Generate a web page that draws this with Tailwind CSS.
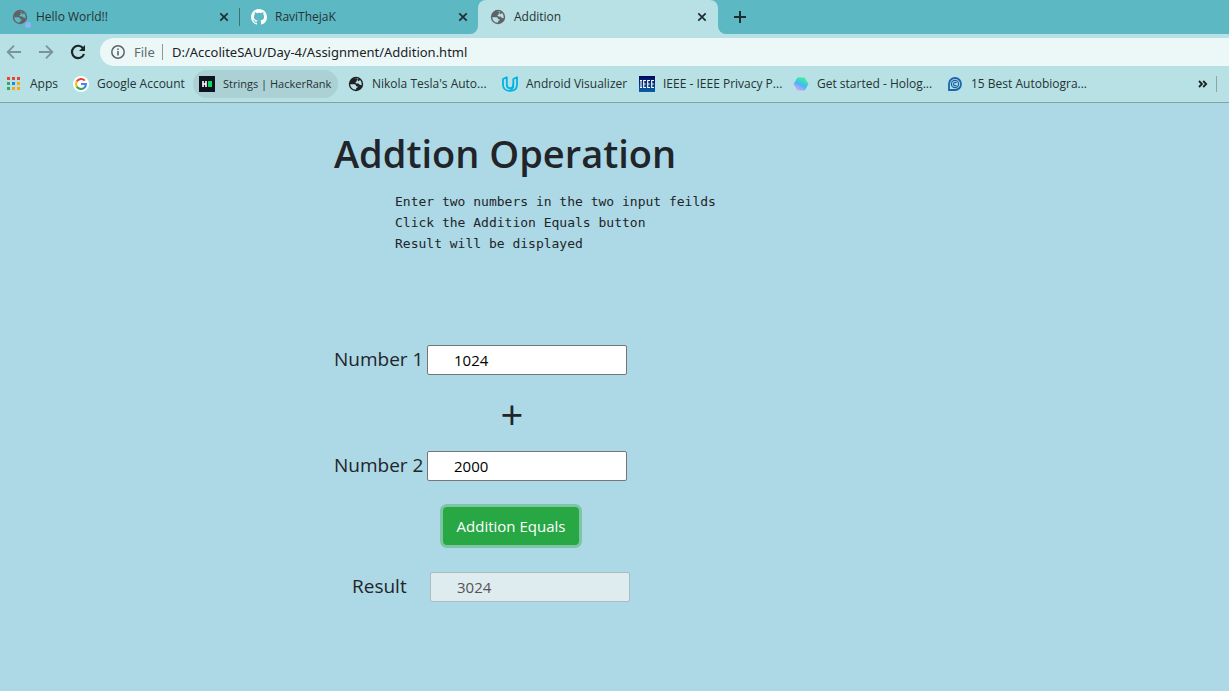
<!DOCTYPE html>
<html lang="en">
<head>
<meta charset="utf-8">
<title>Addition</title>
<script src="https://cdn.jsdelivr.net/npm/@tailwindcss/browser@4"></script>
</head>
<body class="flex min-h-screen flex-col bg-[#add8e6] font-['Open_Sans','Noto_Sans',sans-serif] text-[#212529]">
<svg class="hidden" aria-hidden="true">
  <symbol id="globe" viewBox="0 0 16 16">
    <circle cx="8" cy="8" r="7.2" fill="currentColor"/>
    <path d="M2.2 8.2 6.4 8.3C7.8 8.3 8 9.3 8 10.2L9.7 10.3C9.8 11.3 9.2 12 8.2 12V13.6C5 13.9 2.3 11.4 2.2 8.2ZM6.6 3 8.8 2.4C9.8 2.4 10.2 3.2 9.5 3.8L8.6 4.6V5.8L7.2 6.3 8.4 7.4H10.6L11.6 8.8 13.6 9.2C13.9 7.2 13.3 5.2 12 4L10.6 5.2 9.6 4.8 10.4 2.7C9.2 2.1 7.8 2.1 6.6 3Z" fill="#b7e1e4"/>
  </symbol>
  <symbol id="close" viewBox="0 0 10 10"><path d="M1.3 1.3 8.7 8.7M8.7 1.3 1.3 8.7" stroke="#1f2d30" stroke-width="1.7"/></symbol>
</svg>

<header class="bg-[#b7e1e4] text-[#263234]">
  <nav class="flex h-[34px] bg-[#5cb8c2] text-xs" aria-label="Tabs">
    <div class="flex w-[239px] items-center pr-2.5 pl-3">
      <span class="relative h-4 w-4 shrink-0">
        <svg class="h-4 w-4 text-[#5f6368]" viewBox="0 0 16 16"><circle cx="8" cy="8" r="7.2" fill="currentColor"/><path d="M2.2 8.2 6.4 8.3C7.8 8.3 8 9.3 8 10.2L9.7 10.3C9.8 11.3 9.2 12 8.2 12V13.6C5 13.9 2.3 11.4 2.2 8.2ZM6.6 3 8.8 2.4C9.8 2.4 10.2 3.2 9.5 3.8L8.6 4.6V5.8L7.2 6.3 8.4 7.4H10.6L11.6 8.8 13.6 9.2C13.9 7.2 13.3 5.2 12 4L10.6 5.2 9.6 4.8 10.4 2.7C9.2 2.1 7.8 2.1 6.6 3Z" fill="#5cb8c2"/></svg>
        <span class="absolute top-[13px] left-[13px] h-1.5 w-1.5 rounded-full bg-[#8ab4f8]"></span>
      </span>
      <span class="ml-2 grow">Hello World!!</span>
      <button aria-label="Close Hello World!!"><svg class="h-2.5 w-2.5"><use href="#close"/></svg></button>
    </div>
    <div class="my-2 w-px bg-[#3c7178]"></div>
    <div class="flex w-[238px] items-center pr-2.5 pl-[11px]">
      <svg class="h-4 w-4 shrink-0" viewBox="0 0 16 16" fill="#fff"><path d="M8 0C3.58 0 0 3.58 0 8c0 3.54 2.29 6.53 5.47 7.59.4.07.55-.17.55-.38 0-.19-.01-.82-.01-1.49-2.01.37-2.53-.49-2.69-.94-.09-.23-.48-.94-.82-1.13-.28-.15-.68-.52-.01-.53.63-.01 1.08.58 1.23.82.72 1.21 1.87.87 2.33.66.07-.52.28-.87.51-1.07-1.78-.2-3.64-.89-3.64-3.95 0-.87.31-1.59.82-2.15-.08-.2-.36-1.02.08-2.12 0 0 .67-.21 2.2.82.64-.18 1.32-.27 2-.27s1.36.09 2 .27c1.53-1.04 2.2-.82 2.2-.82.44 1.1.16 1.92.08 2.12.51.56.82 1.27.82 2.15 0 3.07-1.87 3.75-3.65 3.95.29.25.54.73.54 1.48 0 1.07-.01 1.93-.01 2.2 0 .21.15.46.55.38A8.01 8.01 0 0 0 16 8c0-4.42-3.58-8-8-8z"/></svg>
      <span class="ml-2 grow">RaviThejaK</span>
      <button aria-label="Close RaviThejaK"><svg class="h-2.5 w-2.5"><use href="#close"/></svg></button>
    </div>
    <div class="relative flex w-60 items-center rounded-t-lg bg-[#b7e1e4] pr-[11px] pl-3">
      <svg class="absolute bottom-0 -left-2 h-2 w-2" viewBox="0 0 8 8"><path d="M8 0V8H0A8 8 0 0 0 8 0Z" fill="#b7e1e4"/></svg>
      <svg class="absolute -right-2 bottom-0 h-2 w-2" viewBox="0 0 8 8"><path d="M0 0V8H8A8 8 0 0 1 0 0Z" fill="#b7e1e4"/></svg>
      <svg class="h-4 w-4 shrink-0 text-[#5f6368]"><use href="#globe"/></svg>
      <span class="ml-2 grow">Addition</span>
      <button aria-label="Close Addition"><svg class="h-2.5 w-2.5"><use href="#close"/></svg></button>
    </div>
    <button class="ml-4" aria-label="New tab"><svg class="h-3 w-3" viewBox="0 0 12 12"><path d="M6 0V12M0 6H12" stroke="#1f2d30" stroke-width="2"/></svg></button>
  </nav>

  <div class="flex h-9 items-center text-sm">
    <button class="ml-1.5" aria-label="Back"><svg class="h-4 w-4" viewBox="0 0 16 16" fill="none" stroke="#7b9497" stroke-width="1.8"><path d="M15 8H2M8 1.7 1.7 8 8 14.3"/></svg></button>
    <button class="ml-4" aria-label="Forward"><svg class="h-4 w-4" viewBox="0 0 16 16" fill="none" stroke="#7b9497" stroke-width="1.8"><path d="M1 8H14M8 1.7 14.3 8 8 14.3"/></svg></button>
    <button class="ml-4" aria-label="Reload"><svg class="h-4 w-4" viewBox="0 0 16 16"><path d="M13.3 4.5A6.2 6.2 0 1 0 14 10" fill="none" stroke="#1f2426" stroke-width="2.2"/><path d="M15 1V7H9Z" fill="#1f2426"/></svg></button>
    <div class="ml-3.5 flex h-7 grow items-center rounded-l-full bg-[#ecf8f8] pl-[11px]">
      <svg class="h-3.5 w-3.5 shrink-0" viewBox="0 0 14 14"><circle cx="7" cy="7" r="6.2" fill="none" stroke="#5f6368" stroke-width="1.5"/><path d="M6.2 3.4H7.8V5H6.2ZM6.2 6.1H7.8V10.6H6.2Z" fill="#5f6368"/></svg>
      <span class="ml-[9px] w-7 font-['Noto_Sans',sans-serif] text-[13px] text-[#5f6b6d]">File</span>
      <span class="h-4 w-px bg-[#8a999b]"></span>
      <input class="ml-[9px] grow font-['Noto_Sans',sans-serif] text-[13px] text-[#202124] outline-none" aria-label="Address" value="D:/AccoliteSAU/Day-4/Assignment/Addition.html">
    </div>
  </div>

  <nav class="flex h-[33px] items-center gap-1 border-b border-[#84a1a5] pb-1 pl-px text-xs whitespace-nowrap" aria-label="Bookmarks">
    <a href="#" class="flex h-7 w-[62px] items-center gap-[7px] px-1.5">
      <svg class="h-4 w-4 shrink-0" viewBox="0 0 16 16"><path d="M0 1H3V4H0ZM5 1H8V4H5ZM10 1H13V4H10Z" fill="#ea4335"/><path d="M0 6H3V9H0ZM0 11H3V14H0Z" fill="#34a853"/><path d="M5 6H8V9H5Z" fill="#1a87f0"/><path d="M10 6H13V9H10ZM5 11H8V14H5ZM10 11H13V14H10Z" fill="#fbab05"/></svg>Apps</a>
    <a href="#" class="flex h-7 w-[122px] items-center gap-2 px-1.5">
      <svg class="h-4 w-4 shrink-0" viewBox="0 0 16 16"><circle cx="8" cy="8" r="8" fill="#fff"/><g fill="none" stroke-width="2.1"><path d="M11.8 4.6A5 5 0 0 0 3.7 5.6" stroke="#ea4335"/><path d="M3.7 5.5A5 5 0 0 0 3.7 10.5" stroke="#fbbc05"/><path d="M3.7 10.4A5 5 0 0 0 11.2 11.9" stroke="#34a853"/><path d="M11.2 11.9A5 5 0 0 0 12.9 8H8" stroke="#4285f4"/></g></svg>Google Account</a>
    <a href="#" class="flex h-7 w-[145px] items-center gap-2 rounded-full bg-[#abd1d4] px-1.5 text-[11px]">
      <svg class="h-4 w-4 shrink-0" viewBox="0 0 16 16"><path d="M0 0H16V16H0Z" fill="#0e141e"/><path d="M4 5V11M7 5V11M4 8H7" stroke="#fff" stroke-width="1.6"/><path d="M9 5H13V11H9Z" fill="#0bd863"/></svg>Strings | HackerRank</a>
    <a href="#" class="flex h-7 w-[150px] items-center gap-2 px-1.5">
      <svg class="h-4 w-4 shrink-0 text-[#202124]"><use href="#globe"/></svg>Nikola Tesla's Auto...</a>
    <a href="#" class="flex h-7 w-[133px] items-center gap-2 px-1.5">
      <svg class="h-4 w-4 shrink-0" viewBox="0 0 16 16" fill="none" stroke="#02b3e4" stroke-width="1.8" stroke-linejoin="round"><path d="M4.8 1.2 1 3V8.5C1 12.5 3.8 14.9 8 14.9C12.5 14.9 15 12.4 15 8.5V1.2L11.3 3V8.5C11.3 11 10.2 12.2 8.2 12.2C6 12.2 4.8 10.8 4.8 8.5Z"/><path d="M11.3 8.5C11.3 12 9.8 14.2 7.2 14.8"/></svg>Android Visualizer</a>
    <a href="#" class="flex h-7 w-[150px] items-center gap-2 px-1.5">
      <svg class="h-4 w-4 shrink-0" viewBox="0 0 16 16"><defs><linearGradient id="ieee" x2="0" y2="1"><stop stop-color="#02075d"/><stop offset="1" stop-color="#0860a5"/></linearGradient></defs><path d="M0 0H16V16H0Z" fill="url(#ieee)"/><path d="M1 4.5H3M2 4.5V11.5M1 11.5H3M7 4.5H4.7V11.5H7M4.7 8H6.7M11 4.5H8.7V11.5H11M8.7 8H10.7M15 4.5H12.7V11.5H15M12.7 8H14.7" fill="none" stroke="#fff" stroke-width="1.1"/></svg>IEEE - IEEE Privacy P...</a>
    <a href="#" class="flex h-7 w-[150px] items-center gap-2 px-1.5">
      <svg class="h-4 w-4 shrink-0" viewBox="0 0 16 16"><defs><linearGradient id="holo" x1=".2" y1="1" x2=".8" y2="0"><stop stop-color="#f79cf4"/><stop offset=".45" stop-color="#45b8f8"/><stop offset="1" stop-color="#3cfa8c"/></linearGradient></defs><path d="M4.5 1.5H11.5L15.5 8 11.8 14.5H4.5L.5 8Z" fill="url(#holo)"/></svg>Get started - Holog...</a>
    <a href="#" class="flex h-7 w-[150px] items-center gap-2 px-1.5">
      <svg class="h-4 w-4 shrink-0" viewBox="0 0 16 16"><path d="M2 14V8A6 6 0 1 1 8 14Z" fill="#b7e1e4" stroke="#1c65ab" stroke-width="1.8"/><circle cx="8" cy="8" r="3.6" fill="none" stroke="#1c65ab" stroke-width="1.3"/><path d="M9.5 7A1.7 1.7 0 1 0 9.5 9.2" fill="none" stroke="#1c65ab" stroke-width="1.3"/></svg>15 Best Autobiogra...</a>
    <button class="ml-auto" aria-label="More bookmarks"><svg class="h-2 w-2.5" viewBox="0 0 10 8" fill="none" stroke="#202124" stroke-width="1.8"><path d="M1 1 4 4 1 7M5.2 1 8.2 4 5.2 7"/></svg></button>
    <span class="mr-3 ml-1 h-4 w-px bg-[#8aa7aa]"></span>
  </nav>
</header>

<main class="flex grow flex-col items-start pt-6 pl-[334px]">
  <h1 class="text-[38px] leading-[52px] font-semibold">Addtion Operation</h1>
  <pre class="mt-3 ml-[61px] font-['DejaVu_Sans_Mono',monospace] text-[13px] leading-[21px]">Enter two numbers in the two input feilds
Click the Addition Equals button
Result will be displayed</pre>
  <form class="mt-[91px] flex flex-col">
    <div class="flex h-[30px] items-center">
      <label for="n1" class="w-[93px] pb-0.5 text-[19px] whitespace-nowrap">Number 1</label>
      <input id="n1" value="1024" class="h-[30px] w-[200px] rounded-xs border border-[#767676] bg-white px-[26px] text-[15px] text-black">
    </div>
    <div class="flex h-[76px] items-center justify-center pt-1 pl-[60px] text-[40px] leading-10">+</div>
    <div class="flex h-[30px] items-center">
      <label for="n2" class="w-[93px] pb-0.5 text-[19px] whitespace-nowrap">Number 2</label>
      <input id="n2" value="2000" class="h-[30px] w-[200px] rounded-xs border border-[#767676] bg-white px-[26px] text-[15px] text-black">
    </div>
    <button type="button" class="mt-[26px] ml-[109px] h-[38px] w-[136px] rounded bg-[#28a745] text-[15px] whitespace-nowrap text-white ring-3 ring-[#7cc6a3]">Addition Equals</button>
    <div class="mt-[27px] flex h-[30px] items-center pl-[18px]">
      <label for="sum" class="w-[78px] pb-0.5 text-[19px]">Result</label>
      <input id="sum" value="3024" disabled class="h-[30px] w-[200px] rounded-xs border border-[#a9bcc1] bg-[#deebef] px-[26px] text-[15px] text-[#545454]">
    </div>
  </form>
</main>
</body>
</html>
